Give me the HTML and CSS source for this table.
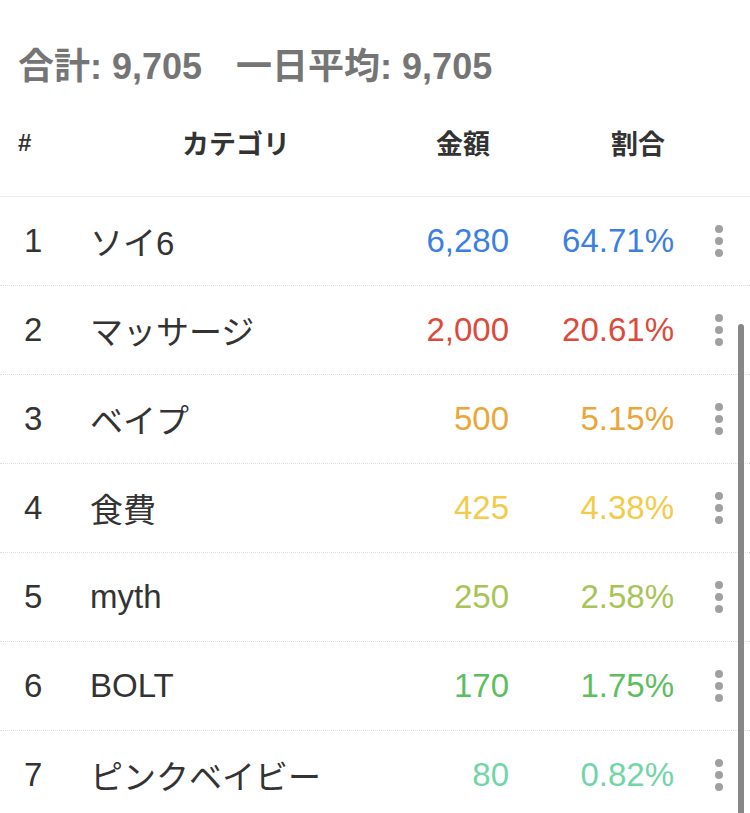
FILE: index.html
```html
<!DOCTYPE html>
<html lang="ja">
<head>
<meta charset="utf-8">
<link rel="stylesheet" href="styles.css">
</head>
<body>
<div class="page">
  <div class="summary">
    <span>合計: 9,705</span>
    <span>一日平均: 9,705</span>
  </div>
  <div class="table">
    <div class="row head">
      <div class="c-idx">#</div>
      <div class="c-cat">カテゴリ</div>
      <div class="c-amt">金額</div>
      <div class="c-pct">割合</div>
      <div class="c-menu"></div>
    </div>
    <div class="row c1">
      <div class="c-idx">1</div><div class="c-cat">ソイ6</div><div class="c-amt">6,280</div><div class="c-pct">64.71%</div>
      <div class="c-menu"><span class="dots"><i></i><i></i><i></i></span></div>
    </div>
    <div class="row c2">
      <div class="c-idx">2</div><div class="c-cat">マッサージ</div><div class="c-amt">2,000</div><div class="c-pct">20.61%</div>
      <div class="c-menu"><span class="dots"><i></i><i></i><i></i></span></div>
    </div>
    <div class="row c3">
      <div class="c-idx">3</div><div class="c-cat">ベイプ</div><div class="c-amt">500</div><div class="c-pct">5.15%</div>
      <div class="c-menu"><span class="dots"><i></i><i></i><i></i></span></div>
    </div>
    <div class="row c4">
      <div class="c-idx">4</div><div class="c-cat">食費</div><div class="c-amt">425</div><div class="c-pct">4.38%</div>
      <div class="c-menu"><span class="dots"><i></i><i></i><i></i></span></div>
    </div>
    <div class="row c5">
      <div class="c-idx">5</div><div class="c-cat">myth</div><div class="c-amt">250</div><div class="c-pct">2.58%</div>
      <div class="c-menu"><span class="dots"><i></i><i></i><i></i></span></div>
    </div>
    <div class="row c6">
      <div class="c-idx">6</div><div class="c-cat">BOLT</div><div class="c-amt">170</div><div class="c-pct">1.75%</div>
      <div class="c-menu"><span class="dots"><i></i><i></i><i></i></span></div>
    </div>
    <div class="row c7">
      <div class="c-idx">7</div><div class="c-cat">ピンクベイビー</div><div class="c-amt">80</div><div class="c-pct">0.82%</div>
      <div class="c-menu"><span class="dots"><i></i><i></i><i></i></span></div>
    </div>
  </div>
  <div class="scrollbar"></div>
</div>
</body>
</html>
```
FILE: styles.css
```css
html, body {
  margin: 0;
  padding: 0;
  background: #fff;
}
body {
  font-family: "Liberation Sans", "Noto Sans CJK JP", sans-serif;
  color: #333;
  overflow: hidden;
}
.page {
  position: relative;
  width: 750px;
  height: 813px;
  overflow: hidden;
}
.summary {
  display: flex;
  gap: 34px;
  padding: 45px 0 0 18px;
  height: 43px;
  font-size: 36px;
  line-height: 43px;
  font-weight: bold;
  color: #757575;
}
.row {
  display: grid;
  grid-template-columns: 90px 292px 127px 165px 76px;
  align-items: center;
  height: 88px;
  border-bottom: 1px dotted #dedede;
  font-size: 33px;
}
.row.head {
  height: 107px;
  border-bottom: 1px solid #ebebeb;
  font-size: 27px;
  font-weight: bold;
  color: #333;
  padding-top: 1px;
}
.c-idx {
  padding-left: 24px;
}
.head .c-idx {
  padding-left: 18px;
  font-size: 24px;
}
.c-cat {
  white-space: nowrap;
}
.head .c-cat {
  text-align: center;
}
.c-amt {
  text-align: right;
}
.head .c-amt {
  padding-right: 19px;
}
.c-pct {
  text-align: right;
}
.head .c-pct {
  padding-right: 9px;
}
.c-menu {
  display: flex;
  justify-content: flex-start;
  padding-left: 41px;
}
.dots {
  display: flex;
  flex-direction: column;
  gap: 4px;
}
.dots i {
  display: block;
  width: 8px;
  height: 8px;
  border-radius: 50%;
  background: #a0a0a0;
}
.c1 .c-amt, .c1 .c-pct { color: #3c7fe1; }
.c2 .c-amt, .c2 .c-pct { color: #dc4a3b; }
.c3 .c-amt, .c3 .c-pct { color: #eaa63b; }
.c4 .c-amt, .c4 .c-pct { color: #f2cb4b; }
.c5 .c-amt, .c5 .c-pct { color: #a8c456; }
.c6 .c-amt, .c6 .c-pct { color: #5dbe5f; }
.c7 .c-amt, .c7 .c-pct { color: #72d5a8; }
.scrollbar {
  position: absolute;
  left: 738px;
  top: 324px;
  width: 6px;
  height: 500px;
  border-radius: 3px;
  background: #878787;
}
```
